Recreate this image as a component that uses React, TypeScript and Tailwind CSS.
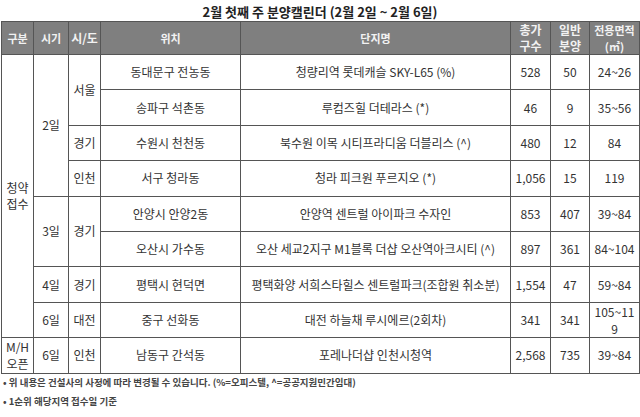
import React from "react";

const font = { fontFamily: '"Noto Sans CJK KR", "Noto Sans", sans-serif' };

type Row = {
  loc: string;
  name: string;
  total: string;
  gen: string;
  area: React.ReactNode;
};

const td = "border border-[#555] text-center align-middle p-0";

export default function App() {
  const r: Row[] = [
    { loc: "동대문구 전농동", name: "청량리역 롯데캐슬 SKY-L65 (%)", total: "528", gen: "50", area: "24~26" },
    { loc: "송파구 석촌동", name: "루컴즈힐 더테라스 (*)", total: "46", gen: "9", area: "35~56" },
    { loc: "수원시 천천동", name: "북수원 이목 시티프라디움 더블리스 (^)", total: "480", gen: "12", area: "84" },
    { loc: "서구 청라동", name: "청라 피크원 푸르지오 (*)", total: "1,056", gen: "15", area: "119" },
    { loc: "안양시 안양2동", name: "안양역 센트럴 아이파크 수자인", total: "853", gen: "407", area: "39~84" },
    { loc: "오산시 가수동", name: "오산 세교2지구 M1블록 더샵 오산역아크시티 (^)", total: "897", gen: "361", area: "84~104" },
    { loc: "평택시 현덕면", name: "평택화양 서희스타힐스 센트럴파크(조합원 취소분)", total: "1,554", gen: "47", area: "59~84" },
    { loc: "중구 선화동", name: "대전 하늘채 루시에르(2회차)", total: "341", gen: "341", area: <span className="leading-[17px] block">105~11<br />9</span> },
    { loc: "남동구 간석동", name: "포레나더샵 인천시청역", total: "2,568", gen: "735", area: "39~84" },
  ];

  const tail = (row: Row) => (
    <>
      <td className={td}>{row.loc}</td>
      <td className={td}>{row.name}</td>
      <td className={td}>{row.total}</td>
      <td className={td}>{row.gen}</td>
      <td className={td}>{row.area}</td>
    </>
  );

  const th = "border border-[#555] bg-[#7f7f7f] text-[#f2f2f2] font-bold text-[11px] leading-[16px] text-center align-middle p-0";
  const rh = "h-[35.4px]";

  return (
    <div className="w-[640px] h-[417px] bg-white overflow-hidden text-[#333]" style={font}>
      <div className="h-[21px] pt-[3px] text-center text-[13px] leading-[17px] font-bold text-[#222]">
        2월 첫째 주 분양캘린더 (2월 2일 ~ 2월 6일)
      </div>
      <table className="ml-[1px] w-[638px] border-collapse table-fixed text-[12px] leading-[16px]">
        <colgroup>
          <col className="w-[32px]" />
          <col className="w-[35px]" />
          <col className="w-[32px]" />
          <col className="w-[140px]" />
          <col className="w-[270px]" />
          <col className="w-[40px]" />
          <col className="w-[39px]" />
          <col className="w-[50px]" />
        </colgroup>
        <thead>
          <tr className="h-[33px]">
            <th className={th}>구분</th>
            <th className={th}>시기</th>
            <th className={th + " text-[12px]"}>시/도</th>
            <th className={th}>위치</th>
            <th className={th}>단지명</th>
            <th className={th + " text-[12px]"}>총가<br />구수</th>
            <th className={th + " text-[12px]"}>일반<br />분양</th>
            <th className={th}>전용면적<br />(㎡)</th>
          </tr>
        </thead>
        <tbody>
          <tr className={rh}>
            <td className={td} rowSpan={8}>청약<br />접수</td>
            <td className={td} rowSpan={4}>2일</td>
            <td className={td} rowSpan={2}>서울</td>
            {tail(r[0])}
          </tr>
          <tr className={rh}>{tail(r[1])}</tr>
          <tr className={rh}>
            <td className={td}>경기</td>
            {tail(r[2])}
          </tr>
          <tr className={rh}>
            <td className={td}>인천</td>
            {tail(r[3])}
          </tr>
          <tr className={rh}>
            <td className={td} rowSpan={2}>3일</td>
            <td className={td} rowSpan={2}>경기</td>
            {tail(r[4])}
          </tr>
          <tr className={rh}>{tail(r[5])}</tr>
          <tr className={rh}>
            <td className={td}>4일</td>
            <td className={td}>경기</td>
            {tail(r[6])}
          </tr>
          <tr className={rh}>
            <td className={td}>6일</td>
            <td className={td}>대전</td>
            {tail(r[7])}
          </tr>
          <tr className={rh}>
            <td className={td + " leading-[17px]"}>M/H<br />오픈</td>
            <td className={td}>6일</td>
            <td className={td}>인천</td>
            {tail(r[8])}
          </tr>
        </tbody>
      </table>
      <div className="pl-[3px] mt-[2px] text-[9.5px] leading-[13px] font-bold text-[#444]">
        • 위 내용은 건설사의 사정에 따라 변경될 수 있습니다. (%=오피스텔, ^=공공지원민간임대)
      </div>
      <div className="pl-[3px] mt-[6px] text-[9.5px] leading-[13px] font-bold text-[#444]">
        • 1순위 해당지역 접수일 기준
      </div>
    </div>
  );
}
